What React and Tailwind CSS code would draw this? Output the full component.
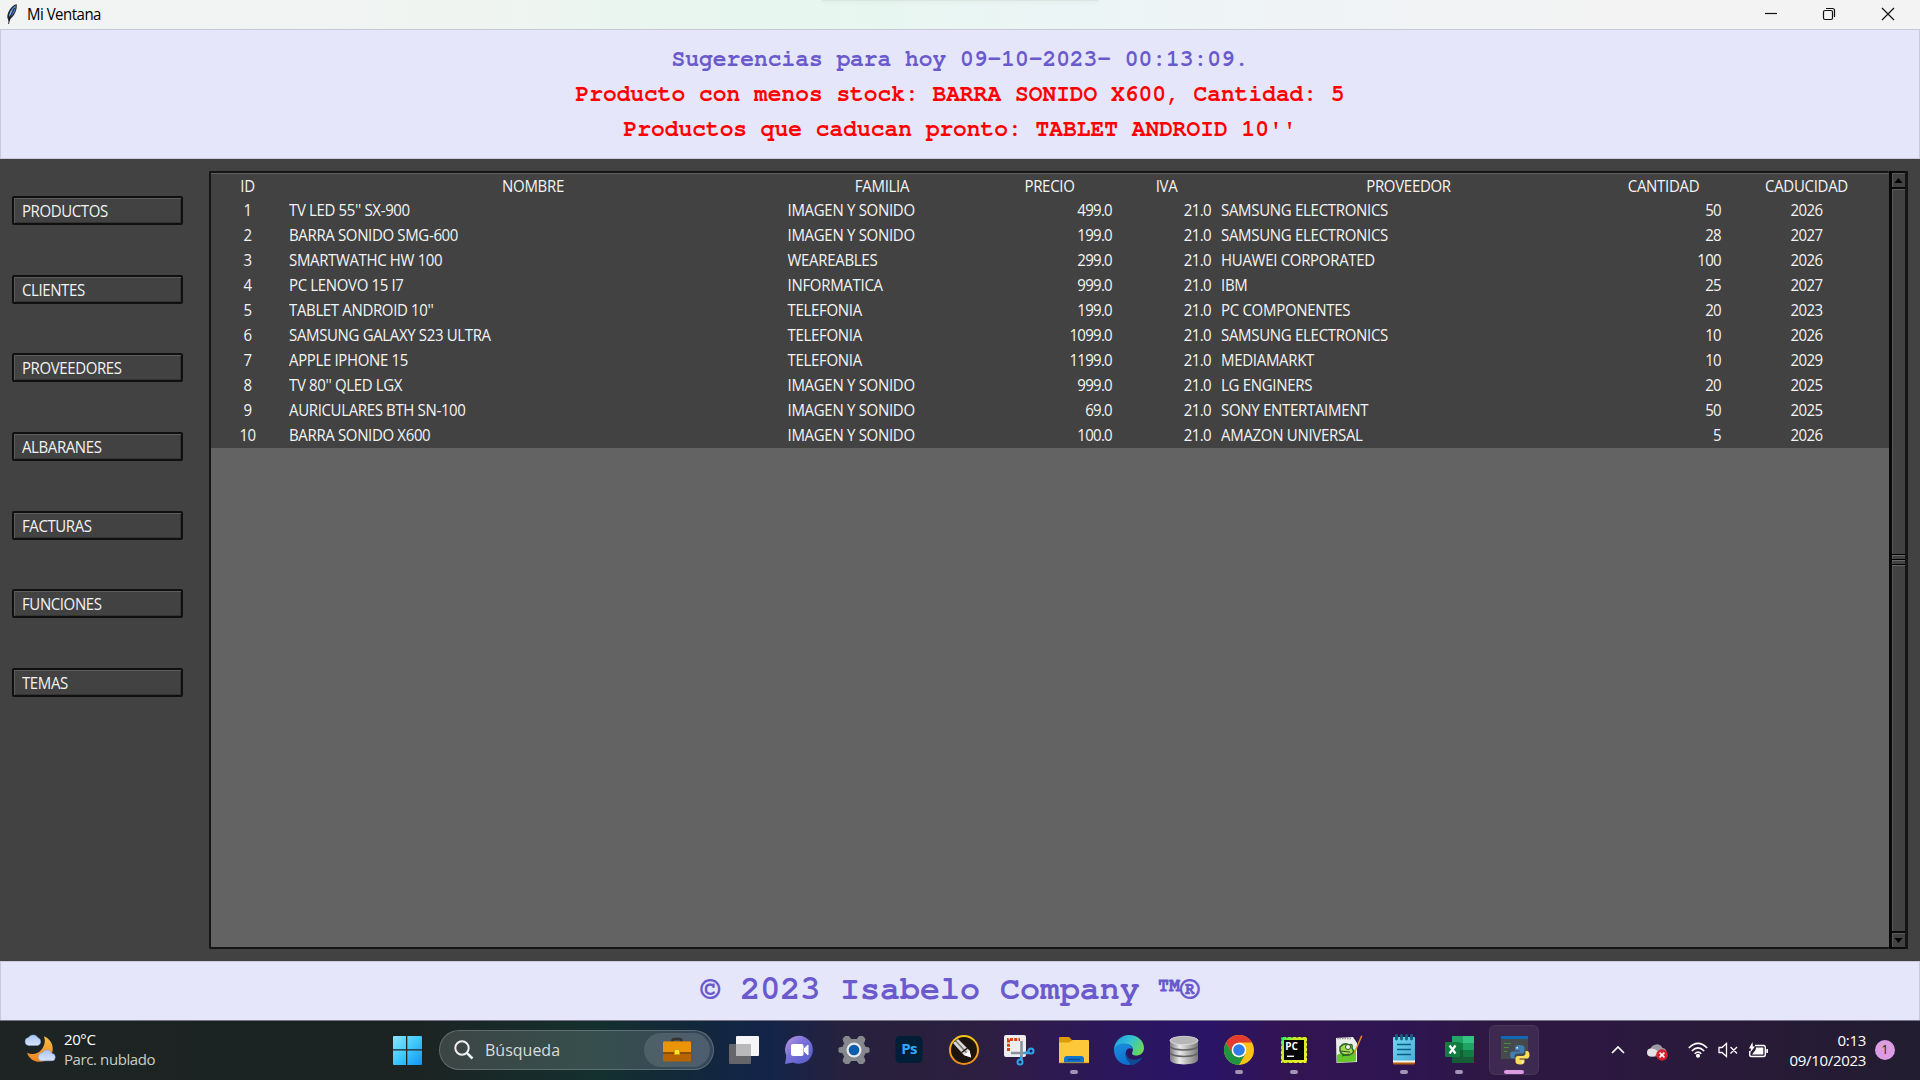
const MENU = ["PRODUCTOS", "CLIENTES", "PROVEEDORES", "ALBARANES", "FACTURAS", "FUNCIONES", "TEMAS"];
const HEAD = ["ID", "NOMBRE", "FAMILIA", "PRECIO", "IVA", "PROVEEDOR", "CANTIDAD", "CADUCIDAD"];
const ROWS = [
  ["1", "TV LED 55'' SX-900", "IMAGEN Y SONIDO", "499.0", "21.0", "SAMSUNG ELECTRONICS", "50", "2026"],
  ["2", "BARRA SONIDO SMG-600", "IMAGEN Y SONIDO", "199.0", "21.0", "SAMSUNG ELECTRONICS", "28", "2027"],
  ["3", "SMARTWATHC HW 100", "WEAREABLES", "299.0", "21.0", "HUAWEI CORPORATED", "100", "2026"],
  ["4", "PC LENOVO 15 I7", "INFORMATICA", "999.0", "21.0", "IBM", "25", "2027"],
  ["5", "TABLET ANDROID 10''", "TELEFONIA", "199.0", "21.0", "PC COMPONENTES", "20", "2023"],
  ["6", "SAMSUNG GALAXY S23 ULTRA", "TELEFONIA", "1099.0", "21.0", "SAMSUNG ELECTRONICS", "10", "2026"],
  ["7", "APPLE IPHONE 15", "TELEFONIA", "1199.0", "21.0", "MEDIAMARKT", "10", "2029"],
  ["8", "TV 80'' QLED LGX", "IMAGEN Y SONIDO", "999.0", "21.0", "LG ENGINERS", "20", "2025"],
  ["9", "AURICULARES BTH SN-100", "IMAGEN Y SONIDO", "69.0", "21.0", "SONY ENTERTAIMENT", "50", "2025"],
  ["10", "BARRA SONIDO X600", "IMAGEN Y SONIDO", "100.0", "21.0", "AMAZON UNIVERSAL", "5", "2026"],
];
const CELL = [
  "scale-y-110 text-center tracking-[-0.5px]",
  "scale-y-110 pl-[5px] tracking-[-0.35px]",
  "scale-y-110 pl-[5.500px] tracking-[-0.3px]",
  "scale-y-110 pr-[5px] text-right tracking-[-0.7px]",
  "scale-y-110 pr-[5px] text-right tracking-[-0.6px]",
  "scale-y-110 pl-[5px] tracking-[-0.3px]",
  "scale-y-110 pr-[5px] text-right tracking-[-0.7px]",
  "scale-y-110 text-center tracking-[-0.6px]",
];
const GRID = "grid grid-cols-[73px_498px_200px_135px_99px_385px_125px_161px]";

const Feather = () => (
  <svg width="14" height="22" viewBox="0 0 14 22">
    <path d="M11.6 1C7 2.4 2.2 8.500 2.300 14.500L4 19L5.800 15.500C9.600 12.500 12.600 6 11.600 1Z" fill="#20262e" />
    <path d="M10.800 2.200C7 4.500 4 9.500 4.400 14.200C8.500 12 11 7 10.800 2.200Z" fill="#4b86d0" />
    <path d="M9.500 5L4.500 15L3.600 21" stroke="#14181d" strokeWidth=".9" fill="none" />
    <path d="M6.500 7.500L4.500 12.500" stroke="#a9c6ea" strokeWidth="1" />
  </svg>
);

const Weather = () => (
  <svg width="32" height="30" viewBox="0 0 32 30">
    <defs>
      <linearGradient id="moon" x1="0" y1="0" x2="0" y2="1"><stop offset="0" stopColor="#f6c043" /><stop offset="1" stopColor="#f08122" /></linearGradient>
      <linearGradient id="cloud" x1="0" y1="0" x2="0" y2="1"><stop offset="0" stopColor="#a9c6f5" /><stop offset="1" stopColor="#d7e4fa" /></linearGradient>
    </defs>
    <path d="M20 2.200C29.500 6 31.500 17.500 25 24C18 31 5.500 28 3 18.500C8 21.500 14.500 20 18 15C20.800 11 21.500 6.500 20 2.200Z" fill="url(#moon)" />
    <path d="M4.500 11.500H13.500A4 4 0 0 0 14 3.800A5.500 5.500 0 0 0 4.500 3.600A4 4 0 0 0 4.500 11.500Z" fill="url(#cloud)" stroke="#87a8e2" strokeWidth=".5" />
    <path d="M17 26.800H27.500A3.700 3.700 0 0 0 27.600 19.400A5 5 0 0 0 18.500 18.700A4.200 4.200 0 0 0 17 26.800Z" fill="url(#cloud)" stroke="#87a8e2" strokeWidth=".5" />
  </svg>
);

const Windows = () => (
  <svg width="30" height="30" viewBox="0 0 30 30">
    <defs><linearGradient id="win" x1="0" y1="0" x2="1" y2="1"><stop offset="0" stopColor="#8fe3ff" /><stop offset=".5" stopColor="#3fc8fb" /><stop offset="1" stopColor="#0f94f8" /></linearGradient></defs>
    <path d="M2 1H14V14.300H1V2A1 1 0 0 1 2 1ZM15.300 1H29A1 1 0 0 1 30 2V14.300H15.300ZM1 15.500H14V30H2A1 1 0 0 1 1 29ZM15.300 15.500H30V29A1 1 0 0 1 29 30H15.300Z" fill="url(#win)" />
  </svg>
);

const Briefcase = () => (
  <svg width="30" height="26" viewBox="0 0 30 26">
    <path d="M10.500 6V4Q10.500 2 12.500 2H17.500Q19.500 2 19.500 4V6" fill="none" stroke="#363330" strokeWidth="2.600" />
    <rect x="1" y="4.500" width="28" height="20" rx="1.200" fill="#b66404" />
    <path d="M2.200 4.500H27.800A1.200 1.200 0 0 1 29 5.700V15H1V5.700A1.200 1.200 0 0 1 2.200 4.500Z" fill="#ec9408" />
    <path d="M1 15H29V17H1Z" fill="#8d4c06" />
    <rect x="12" y="12" width="6" height="6" rx=".6" fill="#d89d04" />
    <rect x="13" y="13" width="4" height="4" fill="#ffe52b" />
  </svg>
);

const ICONS = {
  taskview: (
    <>
      <rect x="0" y="9" width="22" height="20" rx="1" fill="#65656a" />
      <rect x="7" y="1" width="23" height="20" rx="1" fill="#f5f5f5" />
      <path d="M7 9H22V21H7Z" fill="#b9b9bb" />
    </>
  ),
  chat: (
    <>
      <defs><linearGradient id="chat" x1="0" y1="0" x2="1" y2="1"><stop offset="0" stopColor="#c39ae0" /><stop offset=".4" stopColor="#7b73da" /><stop offset="1" stopColor="#5059c9" /></linearGradient></defs>
      <path d="M15 .8A14 14 0 1 1 9 27.500L1 29Q2 24.500 2.200 20.500A14 14 0 0 1 15 .8Z" fill="url(#chat)" />
      <rect x="7" y="9" width="12.500" height="12" rx="2" fill="#fff" />
      <path d="M20.500 13.200L24 10V20L20.500 16.800Z" fill="#fff" stroke="#fff" strokeLinejoin="round" />
    </>
  ),
  settings: (
    <>
      <path d="M5.500 2L10.500 4L12.500 3.200L13.500 .8H16.500L17.500 3.200L19.500 4L24.500 2L26 4L25 9.500L26.500 11.500L30 12.500V17.500L26.500 18.500L25 20.500L26 26L24.500 28L19.500 26L17.500 26.800L16.500 29.200H13.500L12.500 26.800L10.500 26L5.500 28L4 26L5 20.500L3.500 18.500L0 17.500V12.500L3.500 11.500L5 9.500L4 4Z" fill="none" />
      <path d="M6 1.500H10L12 4.500H18L20 1.500H24L26 4L24.500 8.500L26 12L30 13V17L26 18L24.500 21.500L26 26L24 28.500H20L18 25.500H12L10 28.500H6L4 26L5.500 21.500L4 18L0 17V13L4 12L5.500 8.500L4 4Z" fill="#85898d" stroke="#85898d" strokeLinejoin="round" />
      <circle cx="15" cy="15" r="7.500" fill="#e6e8ea" /><circle cx="15" cy="15" r="5.300" fill="#0b5cab" />
    </>
  ),
  ps: (
    <>
      <rect x="1.500" y="1" width="27" height="27" rx="4.500" fill="#001e36" />
      <text x="15" y="19" textAnchor="middle" fontSize="15" fontWeight="700" fontFamily="Open Sans, sans-serif" letterSpacing="-.6" fill="#31a8ff">Ps</text>
    </>
  ),
  pen: (
    <>
      <defs><linearGradient id="ring" x1="0" y1="0" x2="0" y2="1"><stop offset="0" stopColor="#f7c318" /><stop offset="1" stopColor="#f08a18" /></linearGradient></defs>
      <circle cx="15" cy="15" r="14" fill="#1c150f" stroke="url(#ring)" strokeWidth="2" />
      <path d="M4 8L9 4L20.500 15.500L22 22.500L14.800 20Z" fill="#d9d9d9" />
      <path d="M6.500 5.800L17.800 18" stroke="#77736f" strokeWidth="1.500" />
      <path d="M14.800 20L20.500 15.500L22.200 22.500Z" fill="#fff" />
      <path d="M12.500 17.500L18.500 13" stroke="#1c150f" strokeWidth="1.500" />
    </>
  ),
  snip: (
    <>
      <rect x="0" y="0" width="22" height="22" rx="2" fill="#eceef0" />
      <path d="M4.500 16V4.500H16" fill="none" stroke="#d8420f" strokeWidth="3" strokeDasharray="3 1.300" />
      <path d="M7 18H25M17.500 6V25" stroke="#8a949e" strokeWidth="2.600" />
      <circle cx="27" cy="16" r="2.500" fill="none" stroke="#2aa5ea" strokeWidth="2" />
      <circle cx="16" cy="27" r="2.500" fill="none" stroke="#2aa5ea" strokeWidth="2" />
      <path d="M20 18L25 17M17.500 20.500L16.500 24.500" stroke="#2aa5ea" strokeWidth="2" />
    </>
  ),
  folder: (
    <>
      <path d="M0 3A1 1 0 0 1 1 2H10L13 5H20V12H0Z" fill="#dd9c06" />
      <path d="M0 7.500H10L14 5H29A1 1 0 0 1 30 6V28H0Z" fill="#fdc93b" />
      <path d="M5 28V24Q5 21 8 21H22Q25 21 25 24V28Z" fill="#0f74cc" />
      <path d="M9 24.500H21" stroke="#0a4c8f" strokeWidth="1.300" />
      <path d="M0 27.700H30" stroke="#d99a10" strokeWidth=".8" />
    </>
  ),
  edge: (
    <>
      <defs>
        <linearGradient id="edgeTop" x1="0" y1=".2" x2="1" y2=".6"><stop offset="0" stopColor="#1f9fe0" /><stop offset=".5" stopColor="#35c1d4" /><stop offset="1" stopColor="#68d957" /></linearGradient>
        <linearGradient id="edgeLeft" x1="0" y1="0" x2=".4" y2="1"><stop offset="0" stopColor="#1b8fdc" /><stop offset="1" stopColor="#0d6fd0" /></linearGradient>
      </defs>
      <path d="M15 0C24 0 30 6 30 13C30 18 26 20.500 22.500 20.500C18.500 20.500 17.500 19 18.300 17.500C20.500 13 17 9 11.500 9C5.500 9 1.500 12 0 15C0 7 6.500 0 15 0Z" fill="url(#edgeTop)" />
      <path d="M0 15C1 11 5 8.500 10.500 8.500C15 8.500 18 11 18.800 14C14 11.500 11 15.500 12 20C13 25 18 27.500 23 27.500C20.500 29.300 18 30 15 30C7 30 0 24 0 15Z" fill="url(#edgeLeft)" />
      <path d="M11.800 17C12 22.500 17 25.500 22 24.500C25.500 23.800 27 22.500 28 22.500C27.500 25 23 30 15 30C19 27 9.500 27 11.800 17Z" fill="#114a93" />
    </>
  ),
  database: (
    <>
      <defs><linearGradient id="db" x1="0" y1="0" x2="1" y2="0"><stop offset="0" stopColor="#7c7c7c" /><stop offset=".35" stopColor="#e9e9e9" /><stop offset="1" stopColor="#777" /></linearGradient></defs>
      <path d="M1 5V24.500C1 31 29 31 29 24.500V5Z" fill="url(#db)" />
      <ellipse cx="15" cy="5.500" rx="14" ry="4.200" fill="#b6b6b6" stroke="#dedede" strokeWidth=".8" />
      <path d="M1 11.500C4 16 26 16 29 11.500M1 18C4 22.500 26 22.500 29 18" fill="none" stroke="#636363" strokeWidth="1.500" />
    </>
  ),
  chrome: (
    <>
      <circle cx="15" cy="15" r="15" fill="#fbc116" />
      <path d="M2 7.500A15 15 0 0 1 28 7.500H15L8.500 18.700Z" fill="#e33b2e" />
      <path d="M2 7.500L8.500 18.700L15 22.500L21.500 18.700L15 30A15 15 0 0 1 2 7.500Z" fill="#229342" />
      <circle cx="15" cy="15" r="7.300" fill="#fff" /><circle cx="15" cy="15" r="5.800" fill="#2f7de9" />
    </>
  ),
  pycharm: (
    <>
      <defs><linearGradient id="pc" x1="0" y1="0" x2="1" y2="1"><stop offset="0" stopColor="#16ee70" /><stop offset=".3" stopColor="#c9ea22" /><stop offset="1" stopColor="#f2f02f" /></linearGradient></defs>
      <rect x="2" y="2" width="26" height="26" fill="url(#pc)" stroke="#111" strokeDasharray="2 3" strokeWidth=".8" />
      <rect x="5" y="5" width="20" height="20" fill="#050505" />
      <text x="6.200" y="15" fontSize="10" fontWeight="700" fontFamily="Open Sans, sans-serif" fill="#fff">PC</text>
      <path d="M8 21.300H15" stroke="#fff" strokeWidth="1.400" />
    </>
  ),
  notepadpp: (
    <>
      <path d="M2 3L19 2L23 8V27L2.500 28Z" fill="#eeeeea" />
      <path d="M3 20C9 16 16 18 22 14V26.500L3 27.500Z" fill="#67c52d" />
      <path d="M6 12Q10 7 15 10Q19 8 18 13Q22 18 15 20Q8 21 6 16Z" fill="#a6d84c" stroke="#2c6a2b" strokeWidth="1.500" />
      <circle cx="14" cy="12" r="2.500" fill="#f3f9e8" stroke="#2c552b" /><path d="M6 16L16 17M8 21L15 19" stroke="#2c552b" />
      <path d="M28.500 1L21.500 17L19.500 21L20.500 16L27 .500Z" fill="#e08b22" />
      <path d="M3 3.500H18" stroke="#999" strokeWidth="1.500" strokeDasharray="1.500 1" />
    </>
  ),
  notepad: (
    <>
      <defs><linearGradient id="np" x1="0" y1="0" x2="1" y2="1"><stop offset="0" stopColor="#74d7f1" /><stop offset="1" stopColor="#48add6" /></linearGradient></defs>
      <rect x="4" y="26" width="22" height="3.500" rx="1" fill="#b95b0c" />
      <rect x="4" y="24" width="22" height="3.500" fill="#f5f3f0" />
      <rect x="4" y="2" width="22" height="23.500" rx="1" fill="url(#np)" />
      <path d="M8 9.500H22M8 14.500H22M8 19.500H22" stroke="#0b5f86" strokeWidth="1.700" />
      <path d="M7.500 .500V4M12.500 .500V4M17.500 .500V4M22.500 .500V4" stroke="#12627f" strokeWidth="2.800" strokeLinecap="round" />
    </>
  ),
  excel: (
    <>
      <path d="M8 1H30V28H8Z" fill="#21a366" /><path d="M19 1H29A1 1 0 0 1 30 2V8H19Z" fill="#33c481" />
      <path d="M8 8H19V15H8Z" fill="#107c41" /><path d="M19 15H30V21.500H19Z" fill="#107c41" /><path d="M8 15H19V28H8Z" fill="#185c37" /><path d="M19 21.500H30V28H19Z" fill="#135f38" />
      <rect x="1" y="7" width="15" height="15" rx="1" fill="#107c41" />
      <path d="M5.500 10.500L11.500 18.500M11.500 10.500L5.500 18.500" stroke="#fff" strokeWidth="2.200" />
    </>
  ),
  python: (
    <>
      <rect x="2" y="1" width="27" height="23" fill="#474a4d" /><rect x="2" y="1" width="27" height="3" fill="#0e68b4" />
      <path d="M5 8.500H12M5 12.500H10M5 16.500H8" stroke="#4c8b45" strokeWidth="1" />
      <path d="M20.500 10C16.500 10 16 11.500 16 13V15.500H21V16.500H13.500C11.500 16.500 11 18.500 11 20C11 22 12 23.500 13.500 23.500H15.500V21C15.500 19.500 17 18.500 18 18.500H23C24.500 18.500 25.500 17.500 25.500 16V13C25.500 11 23.500 10 20.500 10Z" fill="#3f7fb5" />
      <path d="M21 29.500C25 29.500 25.500 28 25.500 26.500V24.500H20.500V23.500H28C30 23.500 30.500 21.500 30.500 20C30.500 17.500 29.500 16 28 16H26.500V18.500C26.500 20 25 21 24 21H19C17.500 21 16.500 22 16.500 23.500V26.500C16.500 28.500 18 29.500 21 29.500Z" fill="#fddc59" />
      <circle cx="18.200" cy="12.800" r=".9" fill="#fff" /><circle cx="23.500" cy="27" r=".9" fill="#fff" />
    </>
  ),
};
const APPS = [
  ["taskview"], ["chat"], ["settings"], ["ps"], ["pen"], ["snip"], ["folder", 1], ["edge"], ["database"],
  ["chrome", 1], ["pycharm", 1], ["notepadpp"], ["notepad", 1], ["excel", 1], ["python", 2],
];

function TaskIcon({ name, state }) {
  return (
    <div className="flex w-[55px] justify-center">
      <div className={state === 2 ? "flex h-[50px] w-[50px] flex-col items-center rounded-md border border-white/5 bg-white/8 pt-[9px]" : "flex h-[50px] w-[50px] flex-col items-center pt-[10px]"}>
        <svg width="30" height="30" viewBox="0 0 30 30" className="shrink-0 overflow-visible">{ICONS[name]}</svg>
        {state === 1 && <div className="mt-[5px] h-1 w-2 rounded-full bg-[#a294b3]" />}
        {state === 2 && <div className="mt-[5px] h-1 w-5 rounded-full bg-[#dc9ce2]" />}
      </div>
    </div>
  );
}

function ScrollButton({ up }) {
  return (
    <div className="flex h-[18px] items-center justify-center border-y-2 border-y-[#0a0a0a] bg-[#424242] shadow-[inset_1px_1px_0_#5a5a5a]">
      <svg width="9" height="5" viewBox="0 0 8 5"><path d={up ? "M4 0L8 5H0Z" : "M0 0H8L4 5Z"} fill="#000" /></svg>
    </div>
  );
}

export default function App() {
  return (
    <div className="flex h-[1080px] w-[1920px] flex-col overflow-hidden bg-[#424242] font-['Open_Sans',sans-serif]">
      <header className="relative flex h-[30px] shrink-0 items-center justify-between border-b border-[#c6c8d4] bg-[linear-gradient(90deg,#f2f3f3_0%,#f0f4f1_25%,#e8f6ef_36%,#e7f7ef_42%,#ebf5f5_55%,#f0f3f6_68%,#f3f3f3_85%)]">
        <div className="flex items-center gap-2 pb-[2px] pl-[5px]">
          <Feather />
          <span className="scale-y-105 text-[15px] leading-[20px] tracking-[-0.5px] text-black">Mi Ventana</span>
        </div>
        <div className="absolute top-0 left-[822px] h-px w-[276px] bg-[#dbe6e1] shadow-[0_0_5px_#c8d6d0]" />
        <svg width="160" height="29" viewBox="0 0 160 29" fill="none" stroke="#111" strokeWidth="1.200">
          <path d="M5 13.500H17" />
          <rect x="63.500" y="10.500" width="9" height="9" rx="1.500" />
          <path d="M66 8.500H72.500Q74.500 8.500 74.500 10.500V17" />
          <path d="M122 8L134 20M134 8L122 20" />
        </svg>
      </header>

      <section className="h-[129px] shrink-0 border-x border-b border-[#c9c9da] bg-[#e6e6fa] pt-[11px] text-center font-['FreeMono','Liberation_Mono',monospace] text-[22.900px] leading-[35px] font-bold text-[#ff0000]">
        <p className="scale-y-108 text-[#6a5acd]">Sugerencias para hoy 09-10-2023- 00:13:09.</p>
        <p className="scale-y-108">Producto con menos stock: BARRA SONIDO X600, Cantidad: 5</p>
        <p className="scale-y-108">Productos que caducan pronto: TABLET ANDROID 10''</p>
      </section>

      <main className="flex h-[802px] shrink-0 pt-[12px] pr-[12px] pb-[12px] pl-[12px]">
        <nav className="flex w-[197px] flex-col gap-[49.67px] pt-[25px]">
          {MENU.map((m) => (
            <button key={m} className="flex h-[29px] w-[171px] shrink-0 items-center rounded-[2px] border-2 border-[#101010] bg-[#424242] pl-2 text-[15px] leading-none tracking-[-0.4px] text-[#f2f2f2] shadow-[inset_1px_1px_0_#5c5c5c,inset_-1px_-1px_0_#333]">
              <span className="scale-y-110">{m}</span>
            </button>
          ))}
        </nav>
        <div className="flex-1 rounded-[2px] border-2 border-r-0 border-[#151515] bg-[#636363]">
          <div className="border-t border-[#606060] bg-[#424242] pb-px text-[15px] text-[#f4f4f4]">
            <div className={`${GRID} h-[23px] text-center leading-[23px] tracking-[-0.3px]`}>
              {HEAD.map((h) => <div key={h} className="scale-y-110">{h}</div>)}
            </div>
            {ROWS.map((r) => (
              <div key={r[0]} className={`${GRID} h-[25px] leading-[25px] whitespace-nowrap`}>
                {r.map((c, i) => <div key={i} className={CELL[i]}>{c}</div>)}
              </div>
            ))}
          </div>
        </div>
        <div className="flex w-[19px] flex-col border-r-[3px] border-l-[3px] border-r-[#151515] border-l-[#080808] bg-[#424242]">
          <ScrollButton up />
          <div className="flex flex-1 flex-col items-center justify-center gap-[3px] shadow-[inset_1px_1px_0_#5a5a5a]">
            <div className="h-[2px] w-full border-t border-b border-t-black border-b-[#6a6a6a]" />
            <div className="h-[2px] w-full border-t border-b border-t-black border-b-[#6a6a6a]" />
            <div className="h-[2px] w-full border-t border-b border-t-black border-b-[#6a6a6a]" />
          </div>
          <ScrollButton />
        </div>
      </main>

      <footer className="h-[59px] shrink-0 border-x border-t border-[#c9c9da] bg-[#e6e6fa] pr-[20px] text-center font-['FreeMono','Liberation_Mono',monospace] text-[33.300px] leading-[55px] font-bold text-[#6a5acd]">
        © 2023 Isabelo Company ™®
      </footer>

      <div className="flex h-[60px] shrink-0 items-start border-t border-[#777487] bg-[linear-gradient(90deg,#1d2423_0%,#1b2423_22%,#14302e_31%,#12283a_36%,#132449_40%,#27213d_44%,#2c1f3f_51%,#2f1c49_53%,#2a1562_60%,#2a1466_63%,#331453_67%,#2e1552_73%,#2e1842_78%,#2d1842_82%,#281a38_90%,#221d30_100%)]">
        <div className="flex w-[392px] items-center gap-[8px] pt-[8px] pl-[24px]">
          <Weather />
          <div className="text-[15px] leading-[20px]">
            <div className="tracking-[-0.4px] text-white">20°C</div>
            <div className="tracking-[-0.4px] text-[#c9cccb]">Parc. nublado</div>
          </div>
        </div>
        <div className="mt-[14px]"><Windows /></div>
        <div className="mt-[9px] ml-[17px] flex h-10 w-[275px] items-center rounded-full border border-white/20 bg-white/15 pr-[3px] pl-[14px]">
          <svg width="20" height="20" viewBox="0 0 20 20" fill="none" stroke="#f0f0f0" strokeWidth="2"><circle cx="8" cy="8" r="6.700" /><path d="M12.800 12.800L18.500 18.500" strokeWidth="2.500" /></svg>
          <span className="flex-1 pl-[11px] text-[16px] text-[#d9dddd]">Búsqueda</span>
          <div className="flex h-[34px] w-[66px] items-center justify-center rounded-full bg-white/12"><Briefcase /></div>
        </div>
        <div className="ml-[2px] flex pt-[4px]">
          {APPS.map(([n, s]) => <TaskIcon key={n} name={n} state={s} />)}
        </div>
        <div className="flex h-[58px] flex-1 items-center justify-end pr-[25px] text-white">
          <svg width="14" height="8" viewBox="0 0 14 8" fill="none" stroke="white" strokeWidth="1.700"><path d="M1 7L7 1L13 7" /></svg>
          <svg width="22" height="18" viewBox="0 0 22 18" className="mt-1 ml-[22px]">
            <path d="M4 13.500A4 4 0 0 1 3.500 5.800A6.500 6.500 0 0 1 15.500 5A4.300 4.300 0 0 1 16 13.500Z" fill="#9d98a4" />
            <path d="M4 13.500A4 4 0 0 1 4 5.500Q8 5 12 9L7 13.500Z" fill="#e4e2e7" />
            <circle cx="15" cy="12" r="5.800" fill="#d2232d" /><path d="M12.600 9.600L17.400 14.400M17.400 9.600L12.600 14.400" stroke="white" strokeWidth="1.500" />
          </svg>
          <svg width="20" height="16" viewBox="0 0 20 16" className="ml-[19px]" fill="none" stroke="white" strokeWidth="1.500">
            <path d="M.800 6Q10 -3.200 19.200 6M3.800 9Q10 2.800 16.200 9M6.700 11.800Q10 8.500 13.300 11.800" /><circle cx="10" cy="13.800" r="1.300" fill="white" />
          </svg>
          <svg width="20" height="16" viewBox="0 0 20 16" className="ml-[10px]" fill="none" stroke="white" strokeWidth="1.300">
            <path d="M1 5.500H4L8.500 1.500V14.500L4 10.500H1ZM12.500 5L19 11.500M19 5L12.500 11.500" />
          </svg>
          <svg width="21" height="18" viewBox="0 0 21 18" className="ml-[10px]">
            <path d="M7 4.500H15.500Q17.300 4.500 17.300 6.300V13.700Q17.300 15.500 15.500 15.500H3.500Q1.700 15.500 1.700 13.700V10" fill="none" stroke="white" strokeWidth="1.400" />
            <path d="M8 6.500H15.300V13.500H4L7.500 9Z" fill="white" /><path d="M4.500 1L1 7.500H3.200L2 12L7 5.500H4.800Z" fill="white" /><path d="M18.300 8H20V12H18.300Z" fill="white" />
          </svg>
          <div className="ml-[20px] w-[77px] text-right text-[15px] leading-[20px] tracking-[-0.3px]">
            <div>0:13</div>
            <div>09/10/2023</div>
          </div>
          <div className="ml-[9px] flex h-5 w-5 items-center justify-center rounded-full bg-[#dc9ce2] text-[12px] text-[#201525]">1</div>
        </div>
      </div>
    </div>
  );
}
